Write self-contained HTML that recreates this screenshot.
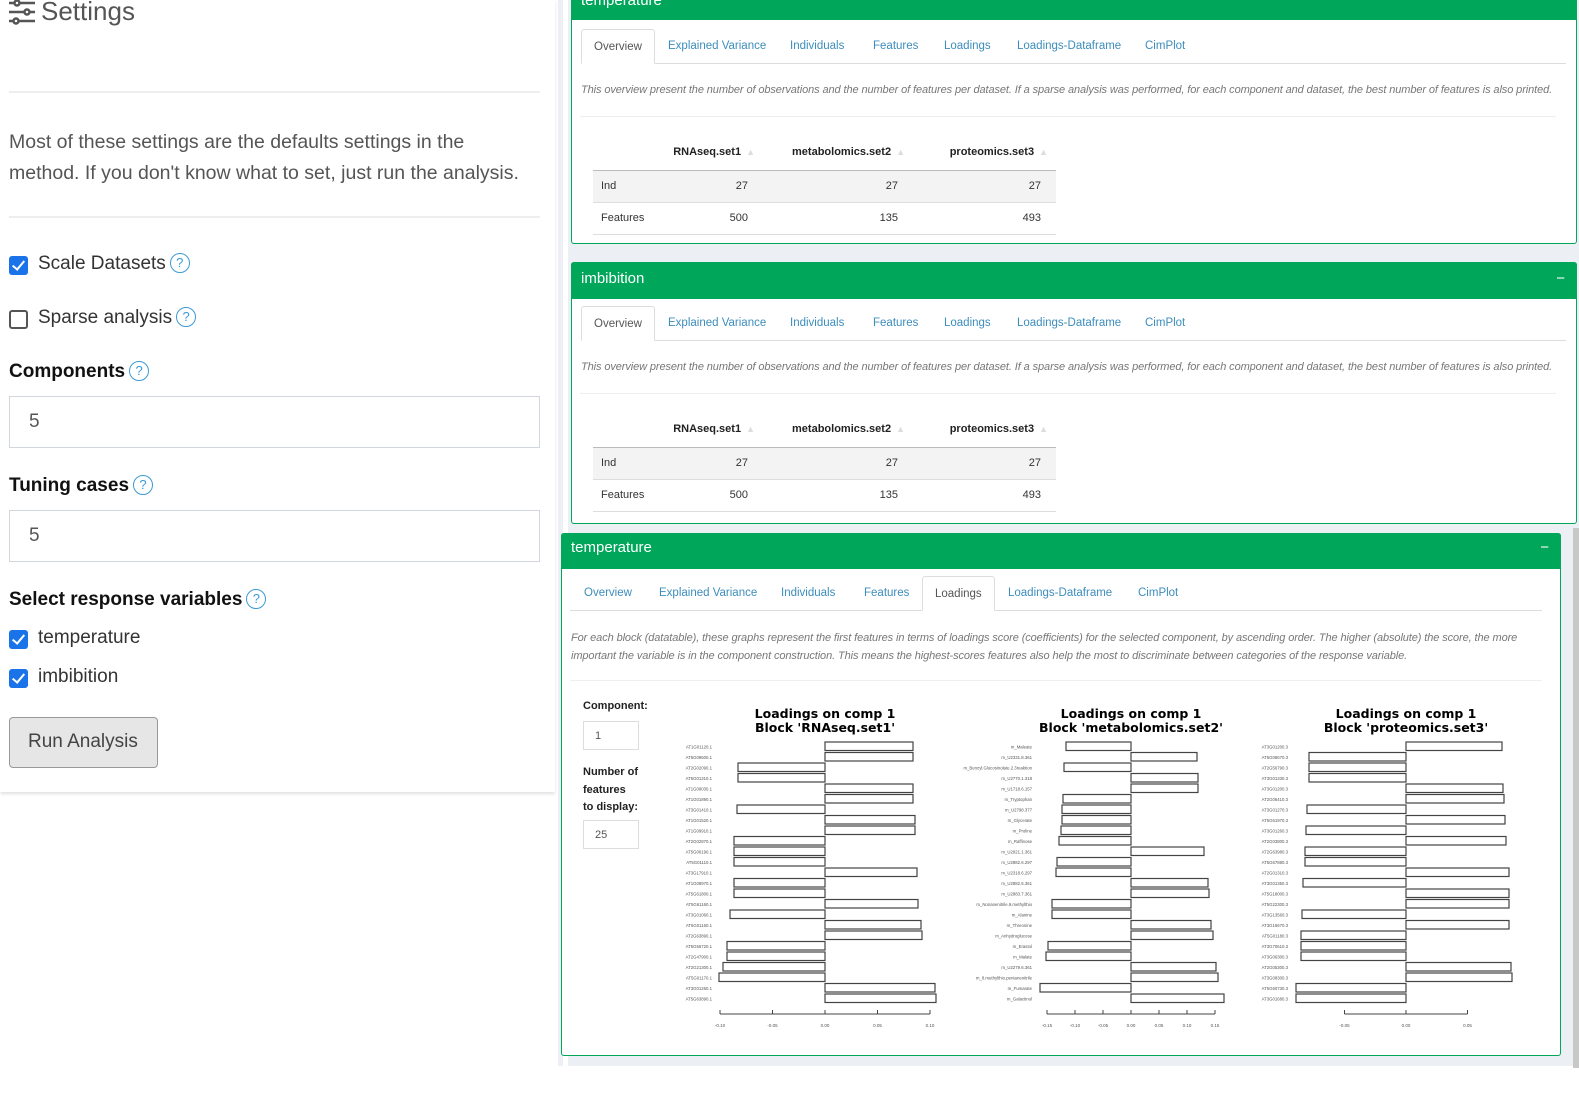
<!DOCTYPE html>
<html><head><meta charset="utf-8">
<style>
*{box-sizing:border-box;margin:0;padding:0}
body{width:1579px;height:1116px;background:#fff;font-family:"Liberation Sans",sans-serif;position:relative;overflow:hidden;color:#333}
.abs{position:absolute}
.graybg{position:absolute;left:558px;top:0;width:1021px;height:1066px;background:#ecf0f5}
.left{position:absolute;left:0;top:0;width:555px;height:792px;background:#fff;box-shadow:0 2px 3px rgba(0,0,0,.12)}
.hr{position:absolute;left:9px;width:531px;height:2px;background:#eee}
.lbl{position:absolute;font-size:19px;color:#333;white-space:nowrap}
.b{font-weight:bold;color:#111}
.q{display:inline-block;width:20px;height:20px;border:1.5px solid #3c9ad6;border-radius:50%;color:#3c9ad6;font-size:13px;text-align:center;line-height:17px;vertical-align:2px;margin-left:4px;font-weight:normal}
.cb{position:absolute;width:19px;height:19px;border-radius:3px;background:#1a73e8}
.cb:after{content:"";position:absolute;left:6px;top:2px;width:5px;height:10px;border:solid #fff;border-width:0 2.5px 2.5px 0;transform:rotate(40deg)}
.cbe{position:absolute;width:19px;height:19px;border-radius:3px;border:2px solid #555;background:#fff}
.inp{position:absolute;left:9px;width:531px;height:52px;border:1px solid #d2d6de;font-size:19px;padding:14px 0 0 19px;color:#555}
.box{position:absolute;background:#fff;border:1px solid #00a65a;border-top:none;border-radius:3px}
.hd{position:absolute;left:-1px;right:-1px;top:0;background:#00a65a;color:#fff;font-size:15px;padding-left:10px;border-radius:3px 3px 0 0}
.hd .m{position:absolute;right:12px;top:0;font-size:15px}
.tabs{position:absolute;left:9px;right:9px;height:35px;border-bottom:1px solid #ddd}
.tab{position:absolute;top:0;height:35px;font-size:11.5px;color:#3c8dbc;line-height:34px;white-space:nowrap}
.tab.act{color:#555;background:#fff;border:1px solid #ddd;border-bottom:1px solid #fff;border-radius:3px 3px 0 0;padding:0 12px}
.desc{position:absolute;font-style:italic;font-size:11px;color:#777;white-space:nowrap;letter-spacing:-.1px}
.sep{position:absolute;height:1px;background:#eee}
table{position:absolute;border-collapse:collapse;font-size:11px}
th{font-weight:bold;text-align:right;height:36px;padding-right:8px;color:#222;border-bottom:1px solid #bbb}
th span{color:#ddd;font-size:9px;margin-left:5px}
td{height:32px;text-align:right;padding-right:15px;border-bottom:1px solid #ddd}
td:first-child{text-align:left;padding-left:8px}
tr.sh td{background:#f3f3f3}
</style></head><body>
<div class="graybg"></div>
<div class="abs" style="left:563px;top:0;width:5px;height:1066px;background:#fff"></div>
<div class="abs" style="left:1573px;top:528px;width:6px;height:540px;background:#c8c8c8"></div>

<div class="left">
  <svg class="abs" style="left:8px;top:0" width="28" height="26" viewBox="0 0 28 26"><g stroke="#555" stroke-width="2.5" fill="#fff"><line x1="1" y1="3" x2="27" y2="3"/><line x1="1" y1="12" x2="27" y2="12"/><line x1="1" y1="21" x2="27" y2="21"/><circle cx="9" cy="3" r="2.5"/><circle cx="19" cy="12" r="2.5"/><circle cx="8" cy="21" r="2.5"/></g></svg>
  <div class="lbl" style="left:41px;top:-4px;font-size:26px;color:#555">Settings</div>
  <div class="hr" style="top:91px"></div>
  <div class="lbl" style="left:9px;top:127px;font-size:19.5px;color:#555;line-height:31px">Most of these settings are the defaults settings in the<br>method. If you don't know what to set, just run the analysis.</div>
  <div class="hr" style="top:216px"></div>
  <div class="cb" style="left:9px;top:256px"></div>
  <div class="lbl" style="left:38px;top:253px">Scale Datasets<span class="q">?</span></div>
  <div class="cbe" style="left:9px;top:310px"></div>
  <div class="lbl" style="left:38px;top:307px">Sparse analysis<span class="q">?</span></div>
  <div class="lbl b" style="left:9px;top:361px">Components<span class="q">?</span></div>
  <div class="inp" style="top:396px">5</div>
  <div class="lbl b" style="left:9px;top:475px">Tuning cases<span class="q">?</span></div>
  <div class="inp" style="top:510px">5</div>
  <div class="lbl b" style="left:9px;top:589px">Select response variables<span class="q">?</span></div>
  <div class="cb" style="left:9px;top:630px"></div>
  <div class="lbl" style="left:38px;top:627px">temperature</div>
  <div class="cb" style="left:9px;top:669px"></div>
  <div class="lbl" style="left:38px;top:666px">imbibition</div>
  <div class="abs" style="left:9px;top:717px;width:149px;height:51px;background:#e6e6e6;border:1.5px solid #999;border-radius:4px;font-size:19px;color:#444;padding:13px 0 0 18px">Run Analysis</div>
</div>

<div class="box" style="left:571px;top:-20px;width:1006px;height:264px">
  <div class="hd" style="height:40px;line-height:18px;padding-top:12px">temperature<span class="m" style="top:4px">−</span></div>
</div>
<div class="box" style="left:571px;top:262px;width:1006px;height:262px">
  <div class="hd" style="height:37px;line-height:33px">imbibition<span class="m">−</span></div>
</div>
<div class="box" style="left:561px;top:533px;width:1000px;height:523px">
  <div class="hd" style="height:36px;line-height:30px">temperature<span class="m">−</span></div>
</div>

<div id="ov"></div>

<div id="load" class="abs" style="left:0;top:0">
  <div class="tabs" style="left:570px;width:972px;top:576px;right:auto">
    <div class="tab" style="left:14px">Overview</div>
    <div class="tab" style="left:89px">Explained Variance</div>
    <div class="tab" style="left:211px">Individuals</div>
    <div class="tab" style="left:294px">Features</div>
    <div class="tab act" style="left:352px">Loadings</div>
    <div class="tab" style="left:438px">Loadings-Dataframe</div>
    <div class="tab" style="left:568px">CimPlot</div>
  </div>
  <div class="desc" style="left:571px;top:629px;line-height:18px">For each block (datatable), these graphs represent the first features in terms of loadings score (coefficients) for the selected component, by ascending order. The higher (absolute) the score, the more<br>important the variable is in the component construction. This means the highest-scores features also help the most to discriminate between categories of the response variable.</div>
  <div class="sep" style="left:570px;width:972px;top:680px"></div>
  <div class="abs" style="left:583px;top:700px;font-size:11px;font-weight:bold;color:#222">Component:</div>
  <div class="abs" style="left:583px;top:721px;width:56px;height:29px;border:1px solid #ddd;font-size:11px;color:#555;padding:8px 0 0 11px">1</div>
  <div class="abs" style="left:583px;top:764px;font-size:11px;font-weight:bold;color:#222;line-height:17.5px;white-space:nowrap">Number of<br>features<br>to display:</div>
  <div class="abs" style="left:583px;top:820px;width:56px;height:29px;border:1px solid #ddd;font-size:11px;color:#555;padding:8px 0 0 11px">25</div>
</div>
<svg id="plots" class="abs" style="left:0;top:0" width="1579" height="1116"></svg>

<script>
function overview(top){
  var h='<div class="tabs" style="left:581px;width:985px;top:'+(top)+'px;right:auto">'+
  '<div class="tab act" style="left:0">Overview</div>'+
  '<div class="tab" style="left:87px">Explained Variance</div>'+
  '<div class="tab" style="left:209px">Individuals</div>'+
  '<div class="tab" style="left:292px">Features</div>'+
  '<div class="tab" style="left:363px">Loadings</div>'+
  '<div class="tab" style="left:436px">Loadings-Dataframe</div>'+
  '<div class="tab" style="left:564px">CimPlot</div></div>'+
  '<div class="desc" style="left:581px;top:'+(top+55)+'px">This overview present the number of observations and the number of features per dataset. If a sparse analysis was performed, for each component and dataset, the best number of features is also printed.</div>'+
  '<div class="sep" style="left:580px;width:976px;top:'+(top+87)+'px"></div>'+
  '<table style="left:593px;top:'+(top+105)+'px;width:463px"><tr><th style="width:70px"></th><th style="width:100px">RNAseq.set1<span>▲</span></th><th style="width:150px">metabolomics.set2<span>▲</span></th><th>proteomics.set3<span>▲</span></th></tr>'+
  '<tr class="sh"><td>Ind</td><td>27</td><td>27</td><td>27</td></tr><tr><td>Features</td><td>500</td><td>135</td><td>493</td></tr></table>';
  return h;
}
document.getElementById('ov').innerHTML=overview(29)+overview(306);

var P=[
 {c:825,t1:'Loadings on comp 1',t2:"Block 'RNAseq.set1'",lx:712,
  v:[88,88,-87,-87,88,88,-88,90,90,-91,-91,-91,92,-91,-91,93,-95,96,97,-98,-98,-102,-106,110,111],
  ax:[-0.10,-0.05,0,0.05,0.10],k:1050,
  names:['AT1G01120.1','AT5G09600.1','AT2G02090.1','AT5G01310.1','AT1G09030.1','AT1G01890.1','AT3G01410.1','AT1G01520.1','AT1G09910.1','AT2G02870.1','AT5G06190.1','AT5G01110.1','AT3G17910.1','AT1G08970.1','AT5G61800.1','AT5G61160.1','AT3G01060.1','AT5G01160.1','AT2G63890.1','AT5G56720.1','AT2G47900.1','AT2G21300.1','AT5G01170.1','AT3G01260.1','AT5G63890.1']},
 {c:1131,t1:'Loadings on comp 1',t2:"Block 'metabolomics.set2'",lx:1032,
  v:[-65,66,-67,67,67,-68,-69,-69,-70,-72,73,-74,-75,77,78,-79,-79,80,82,-83,-85,85,87,-91,93],
  ax:[-0.15,-0.10,-0.05,0,0.05,0.10,0.15],k:560,
  names:['m_Maleate','m_U2331.8.361','m_Benzyl.Glucosinolate.2.3reaktion','m_U2770.1.318','m_U1718.6.157','m_Tryptophan','m_U2798.377','m_Glycerate','m_Proline','m_Raffinose','m_U2921.1.361','m_U2882.6.297','m_U2318.6.297','m_U2882.5.361','m_U2883.7.361','m_Nonanenitrile.9.methylthio','m_Alanine','m_Threonine','m_Anhydroglucose','m_Erastol','m_Malate','m_U2279.6.361','m_8.methylthio.pentanenitrile','m_Fumarate','m_Galactinol']},
 {c:1406,t1:'Loadings on comp 1',t2:"Block 'proteomics.set3'",lx:1288,
  v:[96,-97,-97,-97,97,98,-99,99,-100,100,-101,-101,103,-103,103,103,-104,103,-105,-105,-105,105,106,-110,-110],
  ax:[-0.05,0,0.05],k:1230,
  names:['AT3G01200.3','AT5G08670.3','AT2G56790.3','AT3G01330.3','AT3G01200.3','AT2G06410.3','AT3G01270.3','AT5G61970.3','AT3G01260.3','AT2G03800.3','AT2G63980.3','AT5G67880.3','AT2G01310.3','AT3G01350.3','AT5G18000.3','AT5G22300.3','AT3G13560.3','AT3G16670.3','AT5G01180.3','AT3G70610.3','AT3G06300.3','AT2G05300.3','AT3G08300.3','AT5G60730.3','AT3G01680.3']}
];
var s='';
P.forEach(function(p){
  s+='<text x="'+p.c+'" y="718" font-family="DejaVu Sans" font-weight="bold" font-size="12.5" text-anchor="middle" fill="#000">'+p.t1+'</text>';
  s+='<text x="'+p.c+'" y="732" font-family="DejaVu Sans" font-weight="bold" font-size="12.5" text-anchor="middle" fill="#000">'+p.t2+'</text>';
  for(var i=0;i<25;i++){
    var y=742+i*10.5, v=p.v[i];
    var x=v<0?p.c+v:p.c;
    s+='<rect x="'+x+'" y="'+y+'" width="'+Math.abs(v)+'" height="8.5" fill="#fff" stroke="#444" stroke-width="1.2"/>';
    s+='<text x="'+p.lx+'" y="'+(y+6.5)+'" font-family="Liberation Sans" font-size="4.3" text-anchor="end" fill="#555">'+p.names[i]+'</text>';
  }
  var lo=p.ax[0], hi=p.ax[p.ax.length-1];
  var x0=p.c+lo*p.k, x1=p.c+hi*p.k;
  s+='<line x1="'+x0+'" y1="1014" x2="'+x1+'" y2="1014" stroke="#444" stroke-width="1"/>';
  p.ax.forEach(function(a){var x=p.c+a*p.k;
    s+='<line x1="'+x+'" y1="1010" x2="'+x+'" y2="1014" stroke="#444"/>';
    s+='<text x="'+x+'" y="1027" font-family="Liberation Sans" font-size="4.5" text-anchor="middle" fill="#555">'+a.toFixed(2)+'</text>';});
});
document.getElementById('plots').innerHTML=s;
</script>
</body></html>
